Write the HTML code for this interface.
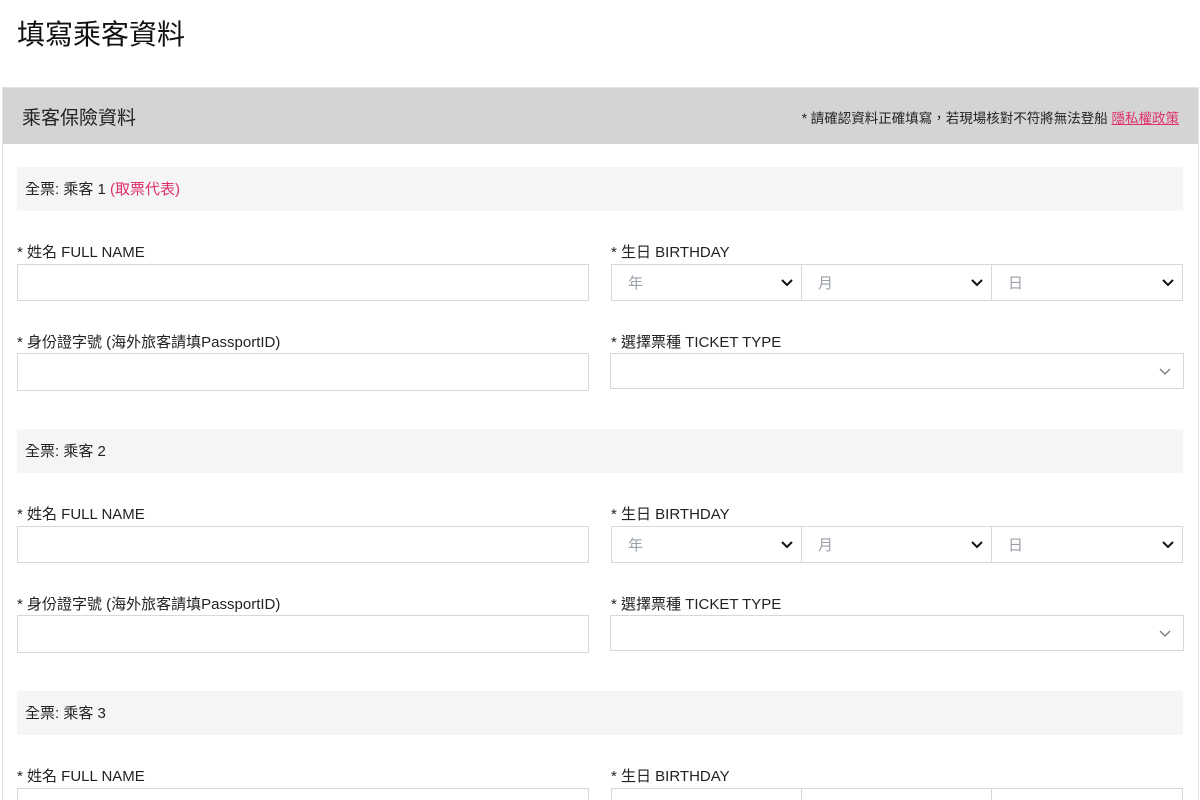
<!DOCTYPE html>
<html style="width:1200px;height:800px;overflow:hidden"><head><meta charset="utf-8"><style>
*{box-sizing:border-box;margin:0;padding:0}
body{width:1200px;height:800px;overflow:hidden;background:#fff;font-family:"Liberation Sans","Noto Sans CJK TC",sans-serif;color:#222;position:relative}
h1{position:absolute;left:17px;top:16px;font-size:28px;font-weight:400;color:#111;line-height:38px}
.card{position:absolute;left:2px;top:87px;width:1197px;height:713px;border:1px solid #e2e2e2;border-bottom:none}
.hdr{position:absolute;left:3px;top:88px;width:1195px;height:56px;background:#d4d4d4}
.hdr .t{position:absolute;left:19px;top:15px;font-size:19px;color:#222}
.hdr .r{position:absolute;right:19px;top:19px;font-size:13.5px;color:#222}
.hdr .r a{color:#e0306e;text-decoration:underline}
.band{position:absolute;left:17px;width:1166px;height:44px;background:#f5f5f5;font-size:15px;line-height:46px;padding-left:8px}
.band span{color:#e0306e}
.lbl{position:absolute;font-size:15px;color:#222}
.inp{position:absolute;border:1px solid #d6d8dc;background:#fff}
.sel{position:absolute;border:1px solid #d6d8dc;background:#fff;font-size:15px;color:#9aa0a8;line-height:38px;padding-left:16px}
.sel svg{position:absolute;right:8px;top:14px}
</style></head><body>
<h1>填寫乘客資料</h1>
<div class="card"></div>
<div class="hdr"><div class="t">乘客保險資料</div><div class="r">* 請確認資料正確填寫，若現場核對不符將無法登船 <a>隱私權政策</a></div></div>

<div class="band" style="top:167px">全票: 乘客 1 <span>(取票代表)</span></div>
<div class="lbl" style="left:17px;top:241px">* 姓名 FULL NAME</div>
<div class="lbl" style="left:611px;top:241px">* 生日 BIRTHDAY</div>
<div class="inp" style="left:17px;top:264px;width:572px;height:37px"></div>
<div class="sel" style="left:611px;top:264px;width:191px;height:37px">年<svg width="12" height="8"><path d="M1 1l5 5 5-5" stroke="#111" stroke-width="2" fill="none"/></svg></div>
<div class="sel" style="left:801px;top:264px;width:191px;height:37px">月<svg width="12" height="8"><path d="M1 1l5 5 5-5" stroke="#111" stroke-width="2" fill="none"/></svg></div>
<div class="sel" style="left:991px;top:264px;width:192px;height:37px">日<svg width="12" height="8"><path d="M1 1l5 5 5-5" stroke="#111" stroke-width="2" fill="none"/></svg></div>
<div class="lbl" style="left:17px;top:331px">* 身份證字號 (海外旅客請填PassportID)</div>
<div class="lbl" style="left:611px;top:331px">* 選擇票種 TICKET TYPE</div>
<div class="inp" style="left:17px;top:353px;width:572px;height:38px"></div>
<div class="sel" style="left:610px;top:353px;width:574px;height:36px"><svg width="12" height="8" style="top:14px;right:12px"><path d="M1 1l5 5 5-5" stroke="#777" stroke-width="1.3" fill="none"/></svg></div>

<div class="band" style="top:429px">全票: 乘客 2</div>
<div class="lbl" style="left:17px;top:503px">* 姓名 FULL NAME</div>
<div class="lbl" style="left:611px;top:503px">* 生日 BIRTHDAY</div>
<div class="inp" style="left:17px;top:526px;width:572px;height:37px"></div>
<div class="sel" style="left:611px;top:526px;width:191px;height:37px">年<svg width="12" height="8"><path d="M1 1l5 5 5-5" stroke="#111" stroke-width="2" fill="none"/></svg></div>
<div class="sel" style="left:801px;top:526px;width:191px;height:37px">月<svg width="12" height="8"><path d="M1 1l5 5 5-5" stroke="#111" stroke-width="2" fill="none"/></svg></div>
<div class="sel" style="left:991px;top:526px;width:192px;height:37px">日<svg width="12" height="8"><path d="M1 1l5 5 5-5" stroke="#111" stroke-width="2" fill="none"/></svg></div>
<div class="lbl" style="left:17px;top:593px">* 身份證字號 (海外旅客請填PassportID)</div>
<div class="lbl" style="left:611px;top:593px">* 選擇票種 TICKET TYPE</div>
<div class="inp" style="left:17px;top:615px;width:572px;height:38px"></div>
<div class="sel" style="left:610px;top:615px;width:574px;height:36px"><svg width="12" height="8" style="top:14px;right:12px"><path d="M1 1l5 5 5-5" stroke="#777" stroke-width="1.3" fill="none"/></svg></div>

<div class="band" style="top:691px">全票: 乘客 3</div>
<div class="lbl" style="left:17px;top:765px">* 姓名 FULL NAME</div>
<div class="lbl" style="left:611px;top:765px">* 生日 BIRTHDAY</div>
<div class="inp" style="left:17px;top:788px;width:572px;height:37px"></div>
<div class="sel" style="left:611px;top:788px;width:191px;height:37px"></div>
<div class="sel" style="left:801px;top:788px;width:191px;height:37px"></div>
<div class="sel" style="left:991px;top:788px;width:192px;height:37px"></div>
</body></html>
